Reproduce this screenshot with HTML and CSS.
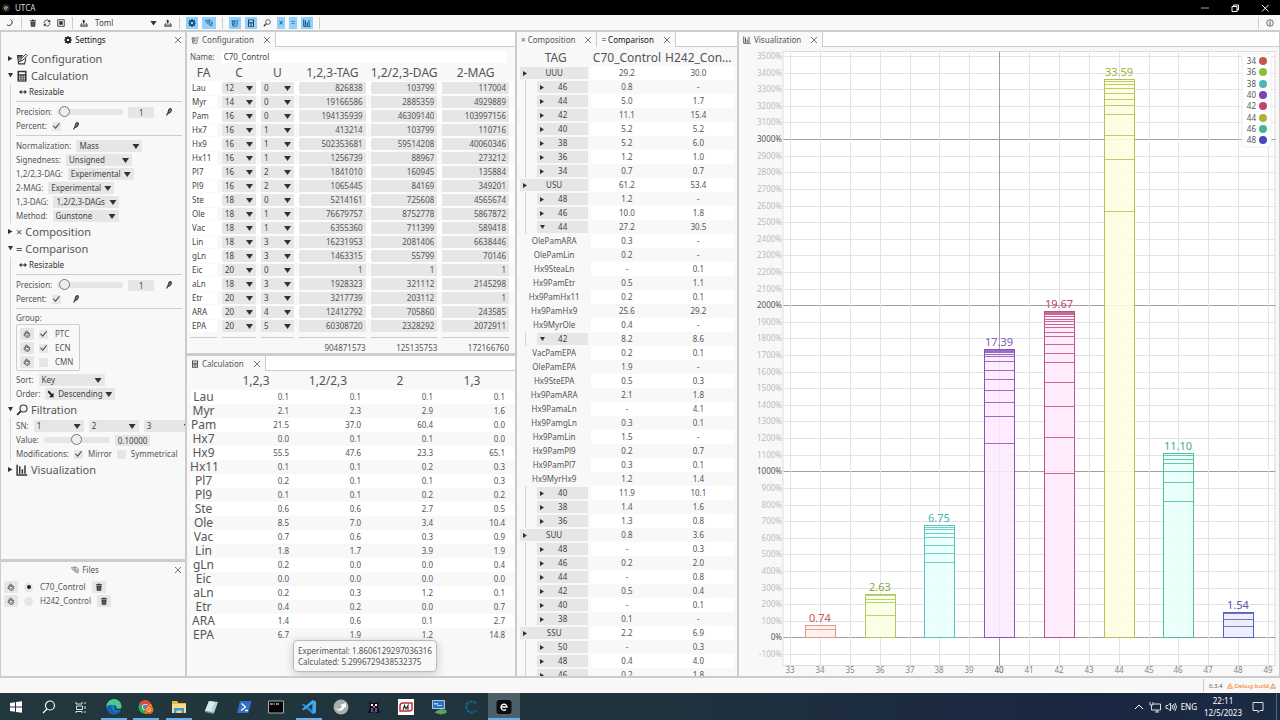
FILE: index.html
```html
<!DOCTYPE html>
<html lang="en">
<head>
<meta charset="utf-8">
<title>UTCA</title>
<link rel="stylesheet" href="styles.css">
</head>
<body>
<svg class="defs" aria-hidden="true">
  <symbol id="i-x" viewBox="0 0 16 16"><path d="M2 2L14 14M14 2L2 14" fill="none" stroke="currentColor" stroke-width="1.6"/></symbol>
  <symbol id="i-moon" viewBox="0 0 16 16"><path d="M9 1A6.500 6.500 0 0 1 2 12A6.800 6.800 0 0 0 12 9A6 6 0 0 0 9 1Z" fill="none" stroke="currentColor" stroke-width="1.2"/></symbol>
  <symbol id="i-trash" viewBox="0 0 16 16"><path d="M2 2.500H6L7 1H9L10 2.500H14V4.500H2ZM3 5.500H13L12.300 15.500H3.700Z" fill="currentColor"/><path d="M6 7V14M8 7V14M10 7V14" stroke="#aaa" stroke-width=".7"/></symbol>
  <symbol id="i-refresh" viewBox="0 0 16 16"><path d="M2 8A6 6 0 0 1 13 4.500M14 8A6 6 0 0 1 3 11.500" fill="none" stroke="currentColor" stroke-width="1.6"/><path d="M14.500 1V6.500H9ZM1.500 15V9.500H7Z" fill="currentColor"/></symbol>
  <symbol id="i-square" viewBox="0 0 16 16"><path d="M1.500 1.500H14.500V14.500H1.500Z" fill="none" stroke="currentColor" stroke-width="1.8"/><path d="M4.500 4.500H11.500V11.500H4.500Z" fill="currentColor"/></symbol>
  <symbol id="i-tray" viewBox="0 0 16 16"><path d="M7 1L11 5H9V9H6V5H4Z" fill="currentColor"/><path d="M4 8L1.500 12V14.500H14.500V12L12 8M2 12H14" fill="none" stroke="currentColor" stroke-width="1.700"/></symbol>
  <symbol id="i-gear" viewBox="0 0 16 16"><circle cx="8" cy="8" r="4.200" fill="none" stroke="currentColor" stroke-width="3.200"/><path d="M8 0V3M8 13V16M0 8H3M13 8H16M2.300 2.300L4.500 4.500M11.500 11.500L13.700 13.700M2.300 13.700L4.500 11.500M11.500 4.500L13.700 2.300" stroke="currentColor" stroke-width="2.400"/></symbol>
  <symbol id="i-tag" viewBox="0 0 16 16"><path d="M1 3L9 2L15 6L14 14L9 12L3 7ZM4 5L12 12M9 2L8 7L14 9M5 4H8" fill="none" stroke="currentColor" stroke-width="1.200"/></symbol>
  <symbol id="i-edit" viewBox="0 0 16 16"><path d="M9 3.500H2L3.500 14.500H11.500L13 7M2.500 5.500H8M3 8H6M3.500 11H6" fill="none" stroke="currentColor" stroke-width="1.400"/><path d="M6 11L7 7.500L13 1.500L15 3.500L9 9.500Z" fill="none" stroke="currentColor" stroke-width="1.300"/></symbol>
  <symbol id="i-calc" viewBox="0 0 16 16"><path d="M2 1H14V15.500H2Z" fill="currentColor"/><path d="M4 3H12V5.500H4ZM4 7.500H6V9H4ZM7 7.500H9V9H7ZM10 7.500H12V9H10ZM4 10H6V11.500H4ZM7 10H9V11.500H7ZM10 10H12V11.500H10ZM4 12.500H6V14H4ZM7 12.500H9V14H7ZM10 12.500H12V14H10Z" fill="#f8f8f8"/></symbol>
  <symbol id="i-lens" viewBox="0 0 16 16"><circle cx="10" cy="6" r="4.700" fill="none" stroke="currentColor" stroke-width="1.500"/><path d="M6.500 9.500L1.500 14.500" stroke="currentColor" stroke-width="2.600"/></symbol>
  <symbol id="i-bars" viewBox="0 0 16 16"><path d="M1.500 1V14.500H15M5 3V13M8.500 7V13M12 2V13" fill="none" stroke="currentColor" stroke-width="2"/></symbol>
  <symbol id="i-info" viewBox="0 0 16 16"><circle cx="8" cy="8" r="6.500" fill="none" stroke="currentColor" stroke-width="1.400"/><path d="M8 3.500V5.500M8 6.500V12.500" stroke="currentColor" stroke-width="1.800"/></symbol>
  <symbol id="i-pin" viewBox="0 0 16 16"><path d="M8 2L12 1L13 4L11 9L7 11L6 8Z" fill="#777" stroke="currentColor" stroke-width="2"/><path d="M6.500 9L3 15" stroke="currentColor" stroke-width="2.400"/></symbol>
  <symbol id="i-hand" viewBox="0 0 16 16"><path d="M4 9V5Q5 3.500 6 5V3Q7.500 1 8.500 3V5Q10 2.500 11 5V7Q13 5.500 13.500 8Q14 12 11 14.500H7Q4 13.500 1.500 9Q2.500 7 4 9L6.500 11M6 5V8M8.500 5V8M11 7V9M7 11.500H11" fill="none" stroke="currentColor" stroke-width="1.400"/></symbol>
  <symbol id="i-arrows" viewBox="0 0 16 16"><path d="M0 8L5 3.500V6.800H11V3.500L16 8L11 12.500V9.200H5V12.500Z" fill="currentColor"/></symbol>
  <symbol id="i-desc" viewBox="0 0 16 16"><path d="M1 4L4 1L10 8L13 5.500V14.500H4L7.500 11Z" fill="currentColor"/></symbol>
  <symbol id="i-warn" viewBox="0 0 16 16"><path d="M8 2L15 14H1ZM8 6V10M8 11V13" fill="none" stroke="currentColor" stroke-width="1.800"/></symbol>
</svg>

<header class="titlebar">
  <svg class="app-logo" viewBox="0 0 10 10"><circle cx="5" cy="5" r="5" fill="#222"/><path d="M3 5H7A2 2 0 1 0 6.300 6.700" fill="none" stroke="#ddd" stroke-width=".9"/></svg>
  <span class="title">UTCA</span>
  <button class="win" aria-label="Minimize"><svg viewBox="0 0 10 10"><path d="M1 5H9" stroke="#888" stroke-width="1.200"/></svg></button>
  <button class="win" aria-label="Restore"><svg viewBox="0 0 10 10"><path d="M2 3.500H7V8.500H2ZM3.500 3.500V2H8.500V7H7" fill="none" stroke="#fff"/></svg></button>
  <button class="win" aria-label="Close"><svg viewBox="0 0 10 10"><path d="M2 2L8.500 8.500M8.500 2L2 8.500" stroke="#fff"/></svg></button>
</header>

<nav class="toolbar">
  <button aria-label="Theme"><svg><use href="#i-moon"/></svg></button>
  <i></i>
  <button aria-label="Delete"><svg><use href="#i-trash"/></svg></button>
  <button aria-label="Reset"><svg><use href="#i-refresh"/></svg></button>
  <button aria-label="Organize"><svg><use href="#i-square"/></svg></button>
  <i></i>
  <button aria-label="Load"><svg><use href="#i-tray"/></svg></button>
  <span class="combo flat format"><select aria-label="Format"><option>Toml</option></select></span>
  <button aria-label="Save"><svg><use href="#i-tray"/></svg></button>
  <i></i>
  <button class="on" aria-label="Settings"><svg><use href="#i-gear"/></svg></button>
  <button class="on wide" aria-label="Files"><svg><use href="#i-tag"/></svg></button>
  <i></i>
  <button class="on" aria-label="Configuration"><svg><use href="#i-edit"/></svg></button>
  <button class="on" aria-label="Calculation"><svg><use href="#i-calc"/></svg></button>
  <button class="wide" aria-label="Filtration"><svg><use href="#i-lens"/></svg></button>
  <button class="on slim">×</button>
  <button class="on slim">=</button>
  <button class="on" aria-label="Visualization"><svg><use href="#i-bars"/></svg></button>
  <i></i>
  <span class="grow"></span>
  <i></i>
  <button aria-label="About"><svg><use href="#i-info"/></svg></button>
</nav>

<main class="dock">
  <div class="col col-left">
    <section class="panel settings">
      <div class="tabs full"><div class="tab active"><span><svg><use href="#i-gear"/></svg>Settings</span><button class="close" aria-label="Close"><svg><use href="#i-x"/></svg></button></div></div>
      <div class="tree">
        <h2><svg><use href="#i-edit"/></svg>Configuration</h2>
        <h2 class="opened"><svg><use href="#i-calc"/></svg>Calculation</h2>
        <div class="group">
          <div class="row strong"><svg><use href="#i-arrows"/></svg>Resizable</div>
          <hr>
          <div class="row"><label for="p1">Precision:</label><input class="slider" id="p1" type="range" min="0" max="32" value="1"><span class="value mid">1</span><svg class="pin"><use href="#i-pin"/></svg></div>
          <div class="row"><label for="c1">Percent:</label><input id="c1" type="checkbox" checked><svg class="pin"><use href="#i-pin"/></svg></div>
          <hr>
          <div class="row"><label for="s1">Normalization:</label><span class="combo"><select id="s1"><option>Mass</option></select></span></div>
          <div class="row"><label for="s2">Signedness:</label><span class="combo"><select id="s2"><option>Unsigned</option></select></span></div>
          <div class="row"><label for="s3">1,2/2,3-DAG:</label><span class="combo"><select id="s3"><option>Experimental</option></select></span></div>
          <div class="row"><label for="s4">2-MAG:</label><span class="combo"><select id="s4"><option>Experimental</option></select></span></div>
          <div class="row"><label for="s5">1,3-DAG:</label><span class="combo"><select id="s5"><option>1,2/2,3-DAGs</option></select></span></div>
          <div class="row"><label for="s6">Method:</label><span class="combo"><select id="s6"><option>Gunstone</option></select></span></div>
        </div>
        <h2><b>×</b>Composition</h2>
        <h2 class="opened"><b>=</b>Comparison</h2>
        <div class="group">
          <div class="row strong"><svg><use href="#i-arrows"/></svg>Resizable</div>
          <hr>
          <div class="row"><label for="p2">Precision:</label><input class="slider" id="p2" type="range" min="0" max="32" value="1"><span class="value mid">1</span><svg class="pin"><use href="#i-pin"/></svg></div>
          <div class="row"><label for="c2">Percent:</label><input id="c2" type="checkbox" checked><svg class="pin"><use href="#i-pin"/></svg></div>
          <hr>
          <div class="row short">Group:</div>
          <div class="box">
            <div class="row"><button class="grip" aria-label="Drag"><svg><use href="#i-hand"/></svg></button><input id="g1" type="checkbox" checked><label for="g1">PTC</label></div>
            <div class="row"><button class="grip" aria-label="Drag"><svg><use href="#i-hand"/></svg></button><input id="g2" type="checkbox" checked><label for="g2">ECN</label></div>
            <div class="row"><button class="grip" aria-label="Drag"><svg><use href="#i-hand"/></svg></button><input id="g3" type="checkbox"><label for="g3">CMN</label></div>
          </div>
          <div class="row"><label for="s7">Sort:</label><span class="combo"><select id="s7"><option>Key</option></select></span></div>
          <div class="row"><label for="s8">Order:</label><span class="combo iconed"><svg><use href="#i-desc"/></svg><select id="s8"><option>Descending</option></select></span></div>
        </div>
        <h2 class="opened"><svg><use href="#i-lens"/></svg>Filtration</h2>
        <div class="group">
          <div class="row"><label for="n1">SN:</label><span class="combo sn"><select id="n1"><option>1</option></select></span><span class="combo sn"><select aria-label="SN 2"><option>2</option></select></span><span class="combo sn"><select aria-label="SN 3"><option>3</option></select></span></div>
          <div class="row"><label for="v1">Value:</label><input class="slider" id="v1" type="range" min="0" max="100" value="50"><span class="value">0.10000</span></div>
          <div class="row"><span>Modifications:</span><input id="m1" type="checkbox" checked><label for="m1">Mirror</label><input id="m2" type="checkbox"><label for="m2">Symmetrical</label></div>
        </div>
        <h2><svg><use href="#i-bars"/></svg>Visualization</h2>
      </div>
    </section>
    <section class="panel files">
      <div class="tabs full"><div class="tab"><span><svg><use href="#i-tag"/></svg>Files</span><button class="close" aria-label="Close"><svg><use href="#i-x"/></svg></button></div></div>
      <div class="list">
        <div class="row"><button class="grip" aria-label="Drag"><svg><use href="#i-hand"/></svg></button><input id="f1" name="file" type="radio" checked><label for="f1">C70_Control</label><button class="grip" aria-label="Delete"><svg><use href="#i-trash"/></svg></button></div>
        <div class="row"><button class="grip" aria-label="Drag"><svg><use href="#i-hand"/></svg></button><input id="f2" name="file" type="radio"><label for="f2">H242_Control</label><button class="grip" aria-label="Delete"><svg><use href="#i-trash"/></svg></button></div>
      </div>
    </section>
  </div>

  <div class="col col-data">
    <section class="panel">
      <div class="tabs"><div class="tab"><span><svg><use href="#i-edit"/></svg>Configuration</span><button class="close" aria-label="Close"><svg><use href="#i-x"/></svg></button></div></div>
      <div class="name"><label for="name">Name:</label><input id="name" type="text" value="C70_Control"></div>
      <table class="config">
        <colgroup><col class="fa"><col class="c"><col class="u"><col><col><col></colgroup>
        <thead><tr><th>FA</th><th>C</th><th>U</th><th>1,2,3-TAG</th><th>1,2/2,3-DAG</th><th>2-MAG</th></tr></thead>
        <tbody id="config"></tbody>
        <tfoot>
          <tr class="rule"><td><hr></td><td><hr></td><td><hr></td><td><hr></td><td><hr></td><td><hr></td></tr>
          <tr><td></td><td></td><td></td><td>904871573</td><td>125135753</td><td>172166760</td></tr>
        </tfoot>
      </table>
    </section>
    <section class="panel">
      <div class="tabs"><div class="tab"><span><svg><use href="#i-calc"/></svg>Calculation</span><button class="close" aria-label="Close"><svg><use href="#i-x"/></svg></button></div></div>
      <table class="calc">
        <colgroup><col class="name-col"><col><col><col><col></colgroup>
        <thead><tr><th></th><th>1,2,3</th><th>1,2/2,3</th><th>2</th><th>1,3</th></tr></thead>
        <tbody id="calc"></tbody>
      </table>
      <div class="tooltip" role="tooltip">Experimental: 1.8606129297036316<br>Calculated: 5.2996729438532375</div>
    </section>
  </div>

  <div class="col">
    <section class="panel">
      <div class="tabs"><div class="tab"><span>× Composition</span><button class="close" aria-label="Close"><svg><use href="#i-x"/></svg></button></div><div class="tab active"><span>= Comparison</span><button class="close" aria-label="Close"><svg><use href="#i-x"/></svg></button></div></div>
      <table class="comparison">
        <thead><tr><th>TAG</th><th>C70_Control</th><th>H242_Con…</th></tr></thead>
        <tbody id="comparison"></tbody>
      </table>
    </section>
  </div>

  <div class="col">
    <section class="panel">
      <div class="tabs"><div class="tab"><span><svg><use href="#i-bars"/></svg>Visualization</span><button class="close" aria-label="Close"><svg><use href="#i-x"/></svg></button></div></div>
      <svg class="plot" id="plot" role="img" aria-label="Equivalent carbon number chart"></svg>
    </section>
  </div>
</main>

<footer class="status"><i></i><span>0.3.4</span><span class="debug"><svg><use href="#i-warn"/></svg>Debug build<svg><use href="#i-warn"/></svg></span></footer>

<div class="taskbar">
  <button aria-label="Start"><svg viewBox="0 0 14 14"><path d="M1 3L6 2.300V6.600H1ZM7 2.100L13 1.300V6.600H7ZM1 7.500H6V11.800L1 11.100ZM7 7.500H13V12.800L7 12Z" fill="#fff"/></svg></button>
  <button aria-label="Search"><svg viewBox="0 0 14 14"><circle cx="8" cy="5.500" r="4.500" fill="none" stroke="#fff" stroke-width="1.200"/><path d="M5 9L1 13" stroke="#fff" stroke-width="1.200"/></svg></button>
  <button aria-label="Task view"><svg viewBox="0 0 14 14"><path d="M2 4V2M8 4V2M2 4H8M2.500 6H8.500V9.500H2.500ZM2 11.500H8M2 11.500V13M8 11.500V13M11 2V4M11 6V9M11 11V13" fill="none" stroke="#ddd"/></svg></button>
  <button class="open" aria-label="Edge"><svg viewBox="0 0 16 16"><circle cx="8" cy="8" r="7.500" fill="#1581cf"/><path d="M.5 8A7.500 7.500 0 0 1 15.500 7C15.500 9.500 13 10.500 10 10C11 6 5 4 .5 8Z" fill="#4cc990"/><path d="M6 8C5 11 9 14 14 12C11 17 1 16 .6 8C2 6 5 5.500 6 8Z" fill="#1a5fb0"/><path d="M8 7C10 7 10.500 9 9.500 10.500H15" fill="none" stroke="#223640" stroke-width="1.300"/></svg></button>
  <button class="open" aria-label="Chrome"><svg viewBox="0 0 18 16"><circle cx="8" cy="8" r="7.500" fill="#2da94f"/><path d="M8 8L1.500 4.200A7.500 7.500 0 0 1 14.800 4.500Z" fill="#e8453c"/><path d="M8 8L14.800 4.500A7.500 7.500 0 0 1 8 15.500Z" fill="#fbc116"/><circle cx="8" cy="8" r="3.500" fill="#fff"/><circle cx="8" cy="8" r="2.700" fill="#4285f4"/><circle cx="12.500" cy="11" r="5" fill="#e2691e"/><path d="M14.300 9.800A2.200 2.200 0 1 0 14.500 11.200H12.800" fill="none" stroke="#fff" stroke-width=".9"/></svg></button>
  <button class="open" aria-label="Explorer"><svg viewBox="0 0 16 16"><path d="M1 2H6L7.500 4H15V14H1Z" fill="#e9b83c"/><path d="M1 5H15V14H1Z" fill="#fbdc83"/><path d="M3 9H13V14H10.500V11.500H5.500V14H3Z" fill="#3d9ad8"/></svg></button>
  <button aria-label="Notepad"><svg viewBox="0 0 16 16"><path d="M6 2L15 3L11 14L2 12Z" fill="#a9d7dc"/><path d="M6 2L12 3L8 12L2 12Z" fill="#dcebe9"/><path d="M2 12L11 14L10 15L2 13Z" fill="#6ea7b0"/></svg></button>
  <button aria-label="PowerShell"><svg viewBox="0 0 16 16"><path d="M4 2H15.500L12.500 14H1Z" fill="#2f6fc4"/><path d="M5.500 4.500L9.500 8L5 11.500M9 11.500H12" fill="none" stroke="#fff" stroke-width="1.300"/></svg></button>
  <button aria-label="Command prompt"><svg viewBox="0 0 16 16"><path d="M.5 2H15.500V14H.5Z" fill="#050505" stroke="#aaa"/><path d="M2 5H5M6 5H7M8 5H11" stroke="#fff" stroke-width="1.200"/></svg></button>
  <button class="open" aria-label="VS Code"><svg viewBox="0 0 16 16"><path d="M11.500 1L15 2.500V13.500L11.500 15L1 5.800L2.500 4.500L11.500 11.300Z" fill="#1f8ad2"/><path d="M11.500 1L15 2.500V13.500L11.500 15V4.800L2.500 11.500L1 10.200Z" fill="#3fa9ee"/></svg></button>
  <button aria-label="Browser"><svg viewBox="0 0 16 16"><circle cx="8" cy="8" r="7.500" fill="#a8adae"/><path d="M2 8C5 12 8 10 9 7L7 6L13 4V9L11.500 8C10 13 4 13 2 8Z" fill="#fff"/></svg></button>
  <button aria-label="Mascot"><svg viewBox="0 0 16 16"><path d="M3 2L5 4H11L13 2L12 8L14 14H10L9 12H7L6 14H2L4 8Z" fill="#160c20"/><path d="M5 5H7V7H5ZM9 5H11V7H9Z" fill="#fff"/><path d="M5 9H7V13H5ZM9 9H11V13H9Z" fill="#7445a0"/><path d="M7.300 7H8.700V9H7.300Z" fill="#e29b4a"/></svg></button>
  <button aria-label="Mendeley"><svg viewBox="0 0 16 16"><path d="M0 0H16V16H0Z" fill="#fff"/><path d="M2 12V7Q2 4 5 4H14V10Q14 12 11 12Z" fill="none" stroke="#c82b36" stroke-width="1.500"/><path d="M5 11L6.500 6.500L8 10L10 6.500V11" fill="none" stroke="#333" stroke-width="1.200"/></svg></button>
  <button aria-label="Remote"><svg viewBox="0 0 16 16"><path d="M1 1H14V10H1Z" fill="#a8c6e4"/><path d="M2 2H13V9H2Z" fill="#2f73be"/><path d="M3 4H7V5.500H3ZM6 6H11V7H6Z" fill="#9ad5f0"/><path d="M5 12L10 10L15.500 11V14L10 15.500L4 14Z" fill="#59a35d"/></svg></button>
  <button aria-label="Editor"><svg viewBox="0 0 16 16"><path d="M13 4.500A5.500 5.500 0 1 0 13 11.500" fill="none" stroke="#175d80" stroke-width="2.500" stroke-dasharray="3 1"/></svg></button>
  <button class="open current" aria-label="UTCA"><svg viewBox="0 0 16 16"><rect x=".5" y="1" width="15" height="14" rx="3" fill="#0b0e10"/><path d="M5 8H11A3 3 0 1 0 10 10.500" fill="none" stroke="#fff" stroke-width="1.300"/></svg></button>
  <span class="grow"></span>
  <svg class="tray" viewBox="0 0 12 12"><path d="M2 8L6 4L10 8" fill="none" stroke="#fff"/></svg>
  <svg class="tray" viewBox="0 0 12 12"><path d="M4 3H11.500V9H4M6 11H10M8 9V11M1 1V4H4V1M2.500 4V9H4" fill="none" stroke="#ddd"/></svg>
  <svg class="tray" viewBox="0 0 12 12"><path d="M1 4.500H3L5.500 2V10L3 7.500H1ZM7 4Q8 6 7 8M8.500 3Q10.500 6 8.500 9M10 2Q13 6 10 10" fill="none" stroke="#ddd"/></svg>
  <span>ENG</span>
  <span class="clock">22:11<br>12/5/2023</span>
  <svg class="tray note" viewBox="0 0 12 12"><path d="M1 1.500H11V9.500H8L6 11.500V9.500H1Z" fill="none" stroke="#ddd"/></svg>
  <i class="peek"></i>
</div>
<script src="app.js"></script>
</body>
</html>
```
FILE: styles.css
```css
* { box-sizing: border-box; }
body {
  margin: 0;
  height: 100vh;
  min-height: 480px;
  display: flex;
  flex-direction: column;
  overflow: hidden;
  background: #f8f8f8;
  color: #555;
  font: 8px/14px "Noto Sans", "Open Sans", sans-serif;
}
button, input, select { font: inherit; color: inherit; border: 0; margin: 0; padding: 0; background: none; border-radius: 0; outline: 0; }
input, select { appearance: none; min-width: 0; }
svg { width: 8px; height: 8px; flex: none; }
.defs { position: absolute; width: 0; height: 0; }
.grow { flex: 1; }

/* window chrome */
.titlebar { display: flex; align-items: center; height: 15px; padding-left: 2px; background: #000; color: #ddd; flex: none; }
.app-logo { margin-right: 5px; }
.title { flex: 1; }
.win { width: 30px; height: 15px; display: grid; place-items: center; }
.win svg { width: 10px; height: 10px; }

.toolbar { display: flex; align-items: center; flex: none; height: 16px; padding: 0 4px; gap: 2px; border-bottom: 1px solid #ccc; }
.toolbar button { width: 12px; height: 12px; display: grid; place-items: center; line-height: 12px; color: #333; }
.toolbar button.wide { width: 14px; }
.toolbar button.slim { width: 8px; }
.toolbar button.on { margin: 0 1px; background: #90d1ff; color: #124a6b; }
.toolbar i { width: 1px; height: 12px; background: #ccc; margin: 0 3px; }
.toolbar .format { width: 68px; }

/* dock */
.dock { flex: 1; min-height: 0; display: grid; grid-template-columns: 186fr 330fr 222fr 542fr; }
.col { min-width: 0; min-height: 0; display: flex; flex-direction: column; }
.col .panel { flex: 1; }
.panel { position: relative; min-height: 0; overflow: hidden; display: flex; flex-direction: column; border: 1px solid #ccc; border-bottom-width: 2px; }
.col-left { display: grid; grid-template-rows: 530fr 117fr; }
.col-data { display: grid; grid-template-rows: 324fr 323fr; }
.tabs { display: flex; flex: none; height: 15px; background: #fff; border-bottom: 1px solid #ccc; }
.tab { display: flex; align-items: center; gap: 9px; height: 15px; padding: 0 4px; background: #f8f8f8; border-right: 1px solid #ccc; }
.tab > span { display: flex; align-items: center; gap: 3px; white-space: nowrap; }
.tab.active { color: #111; }
.tabs.full { border: 0; }
.full .tab { flex: 1; border: 0; padding-right: 3px; }
.full .tab > span { flex: 1; justify-content: center; }
.close { width: 8px; height: 8px; display: grid; color: #555; }

/* settings */
.tree { padding: 3px 3px 0 5px; }
h2 { display: flex; align-items: center; gap: 3px; margin: 0; padding-left: 2px; height: 17px; font-size: 11px; line-height: 17px; font-weight: 400; }
h2::before { content: ""; width: 5px; height: 5px; background: #333; clip-path: polygon(0 0, 90% 50%, 0 100%); }
h2.opened::before { clip-path: polygon(0 0, 100% 0, 50% 90%); }
h2 svg { width: 12px; height: 12px; color: #333; }
h2 b { font-weight: 400; }
.group { margin-left: 4px; padding: 1px 0 0 5px; border-left: 1px solid #d4d4d4; }
.row { display: flex; align-items: center; gap: 5px; height: 14px; white-space: nowrap; }
.row.short { height: 12px; }
.row.strong { gap: 2px; padding-left: 3px; color: #333; }
hr { margin: 2px 0 3px; border: 0; border-top: 1px solid #ccc; }
.combo { position: relative; display: block; flex: none; width: 66px; height: 12px; background: #e6e6e6; border-radius: 1px; }
.combo select { display: block; width: 100%; height: 12px; padding: 0 0 0 3px; line-height: 12px; color: #444; }
.combo::after { content: ""; position: absolute; right: 3px; top: 4px; width: 7px; height: 5px; background: #333; clip-path: polygon(0 0, 100% 0, 50% 100%); pointer-events: none; }
.combo.flat { background: none; }
.iconed { display: flex; align-items: center; width: 70px; padding-left: 2px; color: #222; }
.sn { width: 50px; }
.value { height: 11px; padding: 0 3px; line-height: 11px; background: #e6e6e6; color: #444; text-align: center; }
.mid { width: 26px; }
.pin { margin-left: 6px; color: #333; }
.slider { width: 66px; height: 12px; }
.slider::-webkit-slider-runnable-track { height: 6px; background: #e6e6e6; border-radius: 2px; }
.slider::-webkit-slider-thumb { appearance: none; width: 11px; height: 11px; margin-top: -3px; border: 1px solid #777; border-radius: 50%; background: #eee; }
input[type=checkbox], input[type=radio] { width: 9px; height: 9px; background: #e6e6e6; border-radius: 1px; display: grid; place-items: center; flex: none; }
input[type=radio] { border-radius: 50%; margin: 0 1px; }
input[type=checkbox]:checked::before { content: ""; width: 7px; height: 6px; background: #444; clip-path: polygon(0 50%, 14% 42%, 36% 76%, 88% 0, 100% 8%, 40% 100%); }
input[type=radio]:checked::before { content: ""; width: 4px; height: 4px; border-radius: 50%; background: #222; }
.box { width: 64px; margin-bottom: 2px; padding: 2px 3px 1px; border: 1px solid #ccc; border-radius: 2px; }
.grip { width: 14px; height: 12px; display: grid; place-items: center; background: #e6e6e6; border-radius: 1px; color: #333; }
.list { padding: 3px; }
.box label { padding-left: 2px; }
.list label { padding: 0 1px; }

/* tables */
table { border-collapse: collapse; table-layout: fixed; width: 100%; flex: none; }
th { height: 17px; padding: 0; font-size: 12px; line-height: 16px; font-weight: 400; white-space: nowrap; overflow: hidden; }
td { height: 14px; padding: 0; line-height: 14px; }
.config, .calc { margin-left: 3px; width: calc(100% - 4px); }
col.fa { width: 32px; }
col.c { width: 39px; }
col.u { width: 38px; }
col.name-col { width: 36px; }
.name { display: flex; align-items: center; gap: 6px; flex: none; height: 14px; margin: 3px 8px 0 3px; }
.name input { flex: 1; height: 12px; padding-left: 3px; background: #fff; color: #444; }
.config th, .config td { padding-right: 5px; }
.config input { display: block; width: 100%; height: 12px; background: #e6e6e6; text-align: right; padding: 0 3px; border-radius: 1px; }
.config .fatty { background: #fff; text-align: left; padding: 0 0 0 2px; color: #444; }
.config .combo { width: 100%; }
.config tfoot td { text-align: right; }
.config .rule td { height: 8px; line-height: 1px; }
.config .rule hr { margin: 3px 0; }
.calc thead th { height: 19px; line-height: 18px; padding-right: 12px; }
.calc td { padding-right: 9px; text-align: right; vertical-align: top; line-height: 13px; }
.calc td:first-child { text-align: center; font-size: 12px; line-height: 14px; }
tbody tr:nth-child(odd) { background: #fff; }
.comparison { margin: 2px 3px 0; width: calc(100% - 6px); }
.comparison th:first-child, .comparison td:first-child { background: #f8f8f8; }
.comparison td { text-align: center; }
.tag { display: flex; justify-content: center; height: 14px; padding-right: 3px; }
.tag button { position: relative; flex: 1; height: 12px; line-height: 12px; margin-top: 1px; background: #e6e6e6; color: #444; }
.tag button::before { content: ""; position: absolute; left: 3px; top: 4px; width: 4px; height: 5px; background: #333; clip-path: polygon(0 0, 100% 50%, 0 100%); }
.tag button.down::before { width: 5px; height: 4px; clip-path: polygon(0 0, 100% 0, 50% 100%); }
.tag.child { margin-left: 5px; padding-left: 11px; border-left: 1px solid #d4d4d4; }

.tooltip { position: absolute; left: 106px; bottom: 4px; padding: 4px; border: 1px solid #bbb; border-radius: 4px; background: #f8f8f8; box-shadow: 0 2px 10px #0003; line-height: 11px; white-space: nowrap; }

/* plot */
.plot { flex: 1; width: 100%; min-height: 0; height: auto; font-size: 8px; }
.plot .area { fill: #fff; stroke: #ddd; }
.plot line { stroke: #e3e3e7; }
.plot .major { stroke: #a0a0a0; }
.plot .minor-text { fill: #bbb; }
.plot .x-text { fill: #888; }
.plot .major-text { fill: #555; }
.plot .total { font-size: 11px; }
.plot .legend { fill: #fff; fill-opacity: .9; stroke: #eee; }
.plot .legend-text { fill: #555; }

.status { display: flex; align-items: center; justify-content: flex-end; gap: 5px; flex: none; height: 15px; padding-right: 4px; font-size: 6px; }
.status i { width: 1px; height: 13px; background: #ccc; }
.debug { display: flex; align-items: center; gap: 1px; color: #f5700a; }
.status svg { width: 6px; height: 6px; }

.taskbar { display: flex; align-items: center; flex: none; height: 27px; background: linear-gradient(90deg, #22373d, #20333e 50%, #192641 85%, #1b2b44); color: #fff; }
.taskbar button { width: 32px; height: 27px; margin-right: 1px; display: grid; place-items: center; }
.taskbar button:nth-child(even) { margin-right: 0; }
.taskbar button svg { width: 16px; height: 16px; }
.taskbar button:nth-child(-n+3) svg { width: 14px; height: 14px; }
.taskbar .open { background: linear-gradient(#6aaee8, #6aaee8) bottom / 26px 2px no-repeat; }
.taskbar .current { background-color: #4d6068; background-size: 32px 2px; }
.taskbar .tray { width: 12px; height: 12px; margin-right: 4px; }
.clock { width: 44px; margin-left: 4px; text-align: center; line-height: 12px; }
.taskbar .note { margin: 0 12px 0 7px; }
.peek { width: 1px; height: 27px; margin-right: 3px; background: #56637a; }
```
FILE: app.js
```js
const acids = `Lau 12 0 826838 103799 117004
Myr 14 0 19166586 2885359 4929889
Pam 16 0 194135939 46309140 103997156
Hx7 16 1 413214 103799 110716
Hx9 16 1 502353681 59514208 40060346
Hx11 16 1 1256739 88967 273212
Pl7 16 2 1841010 160945 135884
Pl9 16 2 1065445 84169 349201
Ste 18 0 5214161 725608 4565674
Ole 18 1 76679757 8752778 5867872
Vac 18 1 6355360 711399 589418
Lin 18 3 16231953 2081406 6638446
gLn 18 3 1463315 55799 70146
Eic 20 0 1 1 1
aLn 18 3 1928323 321112 2145298
Etr 20 3 3217739 203112 1
ARA 20 4 12412792 705860 243585
EPA 20 5 60308720 2328292 2072911`;

const calculated = `Lau 0.1 0.1 0.1 0.1
Myr 2.1 2.3 2.9 1.6
Pam 21.5 37.0 60.4 0.0
Hx7 0.0 0.1 0.1 0.0
Hx9 55.5 47.6 23.3 65.1
Hx11 0.1 0.1 0.2 0.3
Pl7 0.2 0.1 0.1 0.3
Pl9 0.1 0.1 0.2 0.2
Ste 0.6 0.6 2.7 0.5
Ole 8.5 7.0 3.4 10.4
Vac 0.7 0.6 0.3 0.9
Lin 1.8 1.7 3.9 1.9
gLn 0.2 0.0 0.0 0.4
Eic 0.0 0.0 0.0 0.0
aLn 0.2 0.3 1.2 0.1
Etr 0.4 0.2 0.0 0.7
ARA 1.4 0.6 0.1 2.7
EPA 6.7 1.9 1.2 14.8`;

// "+" marks a root node, ">" a collapsed child, "v" an expanded child, "." a leaf
const compared = `+ UUU 29.2 30.0
> 46 0.8 -
> 44 5.0 1.7
> 42 11.1 15.4
> 40 5.2 5.2
> 38 5.2 6.0
> 36 1.2 1.0
> 34 0.7 0.7
+ USU 61.2 53.4
> 48 1.2 -
> 46 10.0 1.8
v 44 27.2 30.5
. OlePamARA 0.3 -
. OlePamLin 0.2 -
. Hx9SteaLn - 0.1
. Hx9PamEtr 0.5 1.1
. Hx9PamHx11 0.2 0.1
. Hx9PamHx9 25.6 29.2
. Hx9MyrOle 0.4 -
v 42 8.2 8.6
. VacPamEPA 0.2 0.1
. OlePamEPA 1.9 -
. Hx9SteEPA 0.5 0.3
. Hx9PamARA 2.1 1.8
. Hx9PamaLn - 4.1
. Hx9PamgLn 0.3 0.1
. Hx9PamLin 1.5 -
. Hx9PamPl9 0.2 0.7
. Hx9PamPl7 0.3 0.1
. Hx9MyrHx9 1.2 1.4
> 40 11.9 10.1
> 38 1.4 1.6
> 36 1.3 0.8
+ SUU 0.8 3.6
> 48 - 0.3
> 46 0.2 2.0
> 44 - 0.8
> 42 0.5 0.4
> 40 - 0.1
> 38 0.1 -
+ SSU 2.2 6.9
> 50 - 0.3
> 48 0.4 4.0
> 46 0.2 1.8`;

const rows = text => text.split("\n").map(line => line.split(" "));
const combo = (value, label) =>
  `<span class="combo"><select aria-label="${label}"><option>${value}</option></select></span>`;

document.getElementById("config").innerHTML = rows(acids).map(([name, c, u, ...values]) =>
  `<tr><td><input class="fatty" type="text" aria-label="Fatty acid" value="${name}"></td>` +
  `<td>${combo(c, name + " C")}</td><td>${combo(u, name + " U")}</td>` +
  values.map(v => `<td><input type="text" aria-label="${name} value" value="${v}"></td>`).join("") + "</tr>"
).join("");

document.getElementById("calc").innerHTML = rows(calculated).map(cells =>
  "<tr>" + cells.map(c => `<td>${c}</td>`).join("") + "</tr>").join("");

document.getElementById("comparison").innerHTML = rows(compared).map(([kind, name, a, b]) => {
  const body = kind === "." ? name : `<button${kind === "v" ? ' class="down"' : ""}>${name}</button>`;
  const child = kind === ">" || kind === "v" ? " child" : "";
  return `<tr><td><div class="tag${child}">${body}</div></td><td>${a}</td><td>${b}</td></tr>`;
}).join("");

const series = [
  { n: 34, label: "0.74", dot: "#c4584c", line: "#e59488", fill: "#fff0ea", ink: "#c4584c", at: [74, 53] },
  { n: 36, label: "2.63", dot: "#8abf3c", line: "#a9cc62", fill: "#fbffe2", ink: "#85a83a", at: [263, 253, 232, 211, 132] },
  { n: 38, label: "6.75", dot: "#48b8b4", line: "#5cc4bd", fill: "#e8fffd", ink: "#46b3ad", at: [675, 664, 652, 628, 604, 556, 508, 452] },
  { n: 40, label: "17.39", dot: "#7a44bd", line: "#8a55b8", fill: "#fdeaff", ink: "#8456bd", at: [1739, 1732, 1724, 1718, 1707, 1695, 1664, 1610, 1554, 1490, 1417, 1333, 1170] },
  { n: 42, label: "19.67", dot: "#bf4474", line: "#bb5482", fill: "#ffeafd", ink: "#bb4874", at: [1967, 1961, 1952, 1944, 1934, 1916, 1904, 1886, 1866, 1840, 1814, 1765, 1711, 1659, 1537, 1392, 1205, 988] },
  { n: 44, label: "33.59", dot: "#a9b43c", line: "#b5c253", fill: "#fcffe0", ink: "#a6b03c", at: [3359, 3350, 3331, 3307, 3277, 3243, 3205, 3150, 3026, 2879, 2566] },
  { n: 46, label: "11.10", dot: "#40b894", line: "#4fbea0", fill: "#e8fffb", ink: "#3fae8c", at: [1110, 1096, 1076, 1050, 1004, 934, 819] },
  { n: 48, label: "1.54", dot: "#4449bd", line: "#5a5fb8", fill: "#ececff", ink: "#5256a8", at: [154, 145, 108, 66] },
];

function drawPlot() {
  const svg = document.getElementById("plot");
  const { width, height } = svg.getBoundingClientRect();
  const left = 44, right = width - 4, top = 4, bottom = height - 11;
  const X = n => Math.round(left + 7 + (n - 33) * (right - left - 14) / 16);
  const Y = v => Math.round(top + 5 + (3500 - v) * (bottom - top - 16) / 3600);
  const line = (x1, y1, x2, y2, cls) =>
    `<line x1="${x1 + .5}" y1="${y1 + .5}" x2="${x2 + .5}" y2="${y2 + .5}" class="${cls}"/>`;
  let out = `<rect class="area" x="${left}" y="${top + .5}" width="${right - left}" height="${bottom - top}"/>`;
  for (let v = -100; v <= 3500; v += 100) {
    const major = v % 1000 === 0;
    out += line(left, Y(v), right, Y(v), major ? "major" : "minor");
    out += `<text x="${left - 1}" y="${Y(v) + 3}" text-anchor="end" class="${major ? "major-text" : "minor-text"}">${v}%</text>`;
  }
  for (let n = 33; n <= 49; n++) {
    const major = n === 40;
    out += line(X(n), top, X(n), bottom, major ? "major" : "minor");
    out += `<text x="${X(n)}" y="${bottom + 8}" text-anchor="middle" class="${major ? "major-text" : "x-text"}">${n}</text>`;
  }
  for (const s of series) {
    const a = X(s.n - .5), b = X(s.n + .5), t = Y(s.at[0]);
    out += `<rect x="${a + .5}" y="${t + .5}" width="${b - a}" height="${Y(0) - t}" fill="${s.fill}" fill-opacity=".88" stroke="${s.line}"/>`;
    out += s.at.map(v => `<path d="M${a} ${Y(v) + .5}H${b + 1}" stroke="${s.line}" stroke-opacity=".85"/>`).join("");
    out += `<text class="total" x="${X(s.n)}" y="${t - 3}" text-anchor="middle" fill="${s.ink}">${s.label}</text>`;
  }
  out += `<rect class="legend" x="${right - 33}" y="${top + 3}" width="29" height="93" rx="2"/>`;
  series.forEach((s, i) => {
    const y = top + 10 + Math.round(i * 34 / 3);
    out += `<text class="legend-text" x="${right - 19}" y="${y + 3}" text-anchor="end">${s.n}</text>`;
    out += `<circle cx="${right - 12}" cy="${y}" r="4" fill="${s.dot}"/>`;
  });
  svg.innerHTML = out;
}
drawPlot();
addEventListener("resize", drawPlot);
```
